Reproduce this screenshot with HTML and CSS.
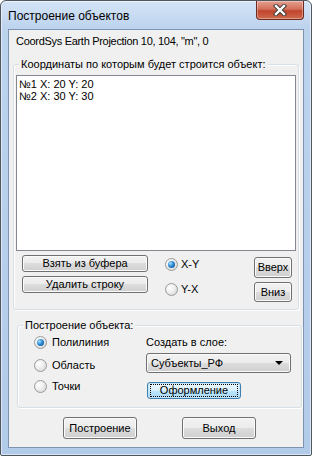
FILE: index.html
```html
<!doctype html>
<html lang="ru">
<head>
    <meta charset="UTF-8"/>
    <title>Построение объектов</title>
    <link rel="stylesheet" href="styles.css">
</head>
<body>
<div class="window">
    <div class="titlebar">
        <span class="title">Построение объектов</span>
        <div class="close-btn">
            <svg width="14" height="12" viewBox="0 0 14 12">
                <path d="M3 2 L11 10 M11 2 L3 10" stroke="#3b3b3b" stroke-width="4.4" stroke-linecap="square"/>
                <path d="M3 2 L11 10 M11 2 L3 10" stroke="#ffffff" stroke-width="2.4" stroke-linecap="square"/>
            </svg>
        </div>
    </div>

    <div class="client">
        <div class="coordsys">CoordSys Earth Projection 10, 104, "m", 0</div>

        <div class="group group-coords">
            <div class="group-title">Координаты по которым будет строится объект:</div>
            <div class="listbox">
                <div>№1 X: 20 Y: 20</div>
                <div>№2 X: 30 Y: 30</div>
            </div>
            <div class="coords-controls">
                <div class="col-buttons">
                    <button class="btn">Взять из буфера</button>
                    <button class="btn">Удалить строку</button>
                </div>
                <div class="col-order">
                    <div class="radio-row"><span class="radio checked"></span>X-Y</div>
                    <div class="radio-row"><span class="radio"></span>Y-X</div>
                </div>
                <div class="col-move">
                    <button class="btn btn-up">Вверх</button>
                    <button class="btn btn-down">Вниз</button>
                </div>
            </div>
        </div>

        <div class="group group-build">
            <div class="group-title">Построение объекта:</div>
            <div class="build-body">
                <div class="col-type">
                    <div class="radio-row"><span class="radio checked"></span>Полилиния</div>
                    <div class="radio-row"><span class="radio"></span>Область</div>
                    <div class="radio-row"><span class="radio"></span>Точки</div>
                </div>
                <div class="col-layer">
                    <div class="layer-label">Создать в слое:</div>
                    <div class="combo">
                        <span>Субъекты_РФ</span>
                        <span class="combo-arrow"></span>
                    </div>
                    <button class="btn btn-focus"><span class="focus-rect">Оформление</span></button>
                </div>
            </div>
        </div>

        <div class="footer">
            <button class="btn btn-footer">Построение</button>
            <button class="btn btn-footer">Выход</button>
        </div>
    </div>
</div>
</body>
</html>
```

FILE: styles.css
```css
body {
    margin: 0;
    font-family: "Liberation Sans", Arial, sans-serif;
    font-size: 11px;
    color: #000;
}

.window {
    width: 312px;
    height: 456px;
    box-sizing: border-box;
    border: 1px solid #50565e;
    border-radius: 6px 6px 2px 2px;
    background: linear-gradient(to bottom, #d4e4f6 0, #bcd3ee 28px, #b2cbe9 100%);
    box-shadow: inset 0 0 0 1px rgba(255, 255, 255, 0.55);
    display: flex;
    flex-direction: column;
}

.titlebar {
    height: 28px;
    display: flex;
    align-items: flex-start;
    justify-content: space-between;
}

.title {
    margin: 8px 0 0 7px;
    font-size: 12px;
    line-height: 15px;
}

.close-btn {
    width: 48px;
    height: 19px;
    margin-right: 7px;
    box-sizing: border-box;
    border: 1px solid #6e2a1e;
    border-top: none;
    border-radius: 0 0 4px 4px;
    background: linear-gradient(to bottom, #e4a08f 0, #d2705a 45%, #c0442c 55%, #cf6a4c 100%);
    box-shadow: inset 0 0 0 1px rgba(255, 255, 255, 0.35);
    display: flex;
    align-items: center;
    justify-content: center;
}

.client {
    flex: 1;
    margin: 0 7px 7px 7px;
    border: 1px solid #7d93b0;
    background: #f0f0f0;
}

.coordsys {
    margin: 5px 0 0 7px;
    line-height: 13px;
    letter-spacing: -0.3px;
}

.group {
    box-sizing: border-box;
    border: 1px solid #d5dfe5;
    border-radius: 3px;
    box-shadow: inset 1px 1px 0 #fff, 1px 1px 0 #fff;
}

.group-title {
    width: fit-content;
    margin: -7px 0 0 5px;
    padding: 0 2px;
    line-height: 13px;
    background: #f0f0f0;
}

.group-coords {
    margin: 16px 0 0 4px;
    width: 286px;
    padding-bottom: 7px;
}

.listbox {
    width: 280px;
    height: 176px;
    box-sizing: border-box;
    margin: 4px 0 0 2px;
    padding: 2px 0 0 2px;
    border: 1px solid #828790;
    background: #fff;
    line-height: 12px;
}

.coords-controls {
    display: flex;
    margin-top: 4px;
}

.col-buttons {
    display: flex;
    flex-direction: column;
    gap: 4px;
    margin-left: 8px;
}

.col-buttons .btn {
    width: 126px;
    height: 17px;
}

.col-order {
    display: flex;
    flex-direction: column;
    gap: 12px;
    margin-left: 17px;
    padding-top: 3px;
}

.col-move {
    display: flex;
    flex-direction: column;
    gap: 4px;
    margin: 2px 6px 0 auto;
}

.btn {
    box-sizing: border-box;
    padding: 0;
    border: 1px solid #707070;
    border-radius: 3px;
    background: linear-gradient(to bottom, #f2f2f2 0, #ebebeb 50%, #dddddd 50%, #cfcfcf 100%);
    box-shadow: inset 0 0 0 1px #fbfbfb;
    font-family: "Liberation Sans", Arial, sans-serif;
    font-size: 11px;
    color: #000;
    line-height: 13px;
}

.btn-up {
    width: 38px;
    height: 21px;
}

.btn-down {
    width: 38px;
    height: 20px;
}

.radio-row {
    display: flex;
    align-items: center;
    gap: 3px;
    height: 13px;
    line-height: 13px;
}

.radio {
    width: 13px;
    height: 13px;
    box-sizing: border-box;
    border-radius: 50%;
    border: 1px solid #9a9a9a;
    background: radial-gradient(circle at 35% 35%, #ffffff 0, #f0f0f0 40%, #cfcfcf 100%);
    display: flex;
    align-items: center;
    justify-content: center;
}

.radio.checked::after {
    content: "";
    width: 7px;
    height: 7px;
    border-radius: 50%;
    background: radial-gradient(circle at 35% 35%, #a6e0ff 0, #2a8ad4 45%, #10437f 100%);
}

.group-build {
    margin: 15px 0 0 8px;
    width: 285px;
    padding-bottom: 8px;
}

.build-body {
    display: flex;
}

.col-type {
    width: 112px;
    padding: 4px 0 0 16px;
    display: flex;
    flex-direction: column;
}

.col-type .radio-row {
    gap: 5px;
}

.col-type .radio-row + .radio-row {
    margin-top: 10px;
}

.col-type .radio-row:last-child {
    margin-top: 8px;
}

.col-layer {
    display: flex;
    flex-direction: column;
    align-items: flex-start;
    padding-top: 4px;
}

.layer-label {
    line-height: 13px;
}

.combo {
    width: 145px;
    height: 20px;
    box-sizing: border-box;
    margin-top: 4px;
    padding: 0 7px 0 4px;
    border: 1px solid #707070;
    border-radius: 3px;
    background: linear-gradient(to bottom, #f2f2f2 0, #ebebeb 50%, #dddddd 50%, #cfcfcf 100%);
    box-shadow: inset 0 0 0 1px #fbfbfb;
    display: flex;
    align-items: center;
    justify-content: space-between;
}

.combo-arrow {
    width: 0;
    height: 0;
    border-left: 4px solid transparent;
    border-right: 4px solid transparent;
    border-top: 4px solid #000;
}

.btn-focus {
    width: 94px;
    height: 17px;
    margin: 9px 0 0 1px;
    border-color: #3c7fb1;
    background: linear-gradient(to bottom, #eaf6fd 0, #d9f0fc 50%, #bee6fd 50%, #a7d9f5 100%);
    box-shadow: inset 0 0 0 1px #c5e6f8;
    display: flex;
    align-items: center;
    justify-content: center;
}

.focus-rect {
    display: block;
    width: 88px;
    box-sizing: border-box;
    border: 1px dotted #000;
    line-height: 11px;
}

.footer {
    display: flex;
    gap: 45px;
    margin: 9px 0 0 54px;
}

.btn-footer {
    width: 74px;
    height: 22px;
}
```
